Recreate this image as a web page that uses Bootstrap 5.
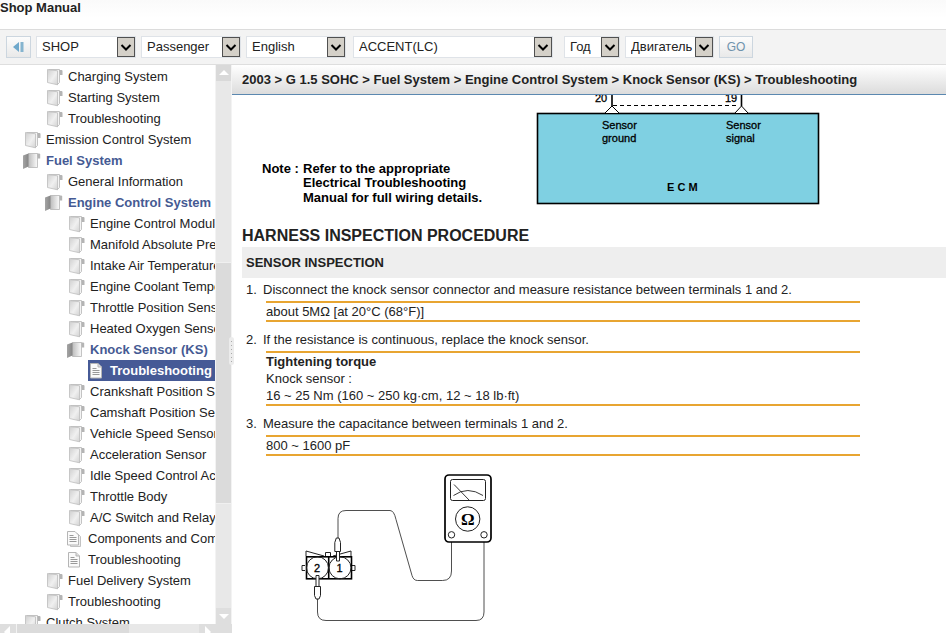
<!DOCTYPE html>
<html lang="en">
<head>
<meta charset="utf-8">
<meta name="viewport" content="width=device-width, initial-scale=1">
<title>Shop Manual</title>
<link rel="stylesheet" href="https://cdn.jsdelivr.net/npm/bootstrap@5.3.0/dist/css/bootstrap.min.css">
<style>
body { font: 13px/17px "Liberation Sans", Arial, sans-serif; color: #222; background: #fff; }
.sprite { position: absolute; width: 0; height: 0; }
.app-head { height: 29px; background: linear-gradient(#fafafa, #fff 18px); }
.app-title { font-size: 13px; line-height: 15px; font-weight: 700; }
.toolbar { gap: 5px; height: 36px; padding: 0 6px; background: #f3f3f3; border-top: 1px solid #dcdcdc; border-bottom: 1px solid #dedede; }
.pick { appearance: none; height: 22px; padding: 0 20px 2px 5px; border: 1px solid #dfe3e8; border-radius: 0; color: #222;
  background: #fff url("data:image/svg+xml,%3Csvg xmlns='http://www.w3.org/2000/svg' width='18' height='20'%3E%3Crect x='.5' y='.5' width='17' height='19' fill='%23d4d0c8' stroke='%23505050'/%3E%3Cpath d='M4.500 8l4.500 4.500L13.500 8' fill='none' stroke='%23000' stroke-width='2'/%3E%3C/svg%3E") no-repeat right 0 center; }
.pick-md { width: 100px; }
.pick-lg { width: 200px; margin-left: 2px; }
.pick-year { width: 56px; margin-left: 6px; }
.pick-engine { width: 89px; }
.tool-btn { height: 22px; border: 1px solid #ccd6df; border-radius: 0; padding: 0; background: linear-gradient(#fcfcfc, #e9e9e9); color: #6f93ad; font-size: 12px; line-height: 18px; }
.tool-back { width: 25px; }
.tool-go { width: 34px; }
.side { width: 232px; }
.tree-pane { padding: 1px 0 0 25px; }
.tree-pane ul ul { padding-left: 22px; }
.node { display: flex; align-items: center; height: 21px; gap: 5px; color: #222; text-decoration: none; white-space: nowrap; }
.node svg { width: 16px; height: 18px; flex: none; overflow: visible; }
.node.is-open { color: #455a93; font-weight: 700; }
.node.is-doc { margin-left: -2px; }
.node.is-current { background: #465a96; color: #fff; font-weight: 700; margin-left: -3px; padding-left: 1px; }
.vbar { width: 17px; background: #e8e8e8; border-left: 1px solid #f3f3f3; border-right: 1px solid #f3f3f3; }
.vbar-end { flex: 0 0 16px; background: #d9d9d9; }
.vbar-down { background: #dedede; }
.thumb-v { flex: 241; background: #dbdbdb; border-top: 1px solid #f0f0f0; border-bottom: 1px solid #f0f0f0; }
.gap-above { flex: 182; }
.gap-below { flex: 104; }
.hbar { height: 9px; background: #e8e8e8; overflow: hidden; }
.hbar-end { flex: 0 0 16px; background: #dedede; }
.hbar svg { display: block; }
.thumb-h { flex: 113; background: #dbdbdb; border-left: 1px solid #f3f3f3; }
.gap-right { flex: 70; }
.corner { flex: 0 0 17px; background: #dedede; }
.grip { position: absolute; right: -2px; top: 272px; width: 5px; height: 28px; background: #ececec; border-radius: 3px; }
.grip svg { display: block; }
.crumbs { height: 30px; padding-left: 10px; line-height: 30px; background: linear-gradient(#fff, #dcdcdc); border-bottom: 1px solid #5b88b0; font-size: 13px; font-weight: 700; white-space: nowrap; }
.doc { padding-left: 10px; }
.doc h1 { font-size: 16px; line-height: 20px; font-weight: 700; margin: 0 0 1px; }
.doc h2 { font-size: 13px; line-height: 31px; font-weight: 700; margin: 0 0 3px; padding-left: 4px; background: #eee; }
.steps { padding-left: 4px; }
.steps > li { margin-bottom: 9px; }
.steps > li:last-child { margin-bottom: 0; }
.num { width: 17px; flex: none; }
.spec { margin: 3px 86px 0 20px; border-top: 2px solid #e8a531; border-bottom: 2px solid #e8a531; }
.fig { display: block; max-width: 100%; }
.fig text { font-family: "Liberation Sans", Arial, sans-serif; fill: #000; }
</style>
<script src="https://cdn.jsdelivr.net/npm/bootstrap@5.3.0/dist/js/bootstrap.bundle.min.js"></script>
</head>
<body class="vh-100 d-flex flex-column overflow-hidden">
<svg class="sprite" aria-hidden="true">
  <defs>
    <linearGradient id="gPage" x1="0" y1="0" x2="1" y2="1"><stop offset="0" stop-color="#cfcfcf"/><stop offset=".55" stop-color="#f0f0f0"/><stop offset="1" stop-color="#d2d2d2"/></linearGradient>
    <linearGradient id="gCover"><stop offset="0" stop-color="#a5a5a5"/><stop offset="1" stop-color="#858585"/></linearGradient>
    <linearGradient id="gInner"><stop offset="0" stop-color="#bdbdbd"/><stop offset="1" stop-color="#fbfbfb"/></linearGradient>
  </defs>
  <symbol id="book" viewBox="0 0 16 18">
    <path d="M12 2h2.500q1 0 1 1v4h-2.500z" fill="#b4b4b4"/>
    <path d="M2 1.500h10.500v13l-2 2z" fill="#f4f4f4" stroke="#b5b5b5" stroke-width=".8"/>
    <path d="M.5 1.500l10 1.300v14L.5 14.500z" fill="url(#gPage)" stroke="#bcbcbc" stroke-width=".8"/>
  </symbol>
  <symbol id="book-open" viewBox="0 0 16 18" overflow="visible">
    <path d="M11.500 1.500H14q1.200 0 1.200 1v4h-2.500z" fill="#b4b4b4"/>
    <path d="M3.500 1.500h9v14h-9z" fill="url(#gInner)" stroke="#b5b5b5" stroke-width=".8"/>
    <path d="M-2 3.500l5.500-2v13L-2 17z" fill="url(#gCover)"/>
  </symbol>
  <symbol id="page" viewBox="0 0 16 18">
    <path d="M1.500 1.500h7.500l3.500 3.500v11h-11z" fill="#fafafa" stroke="#b5b5b5"/>
    <path d="M9 1.500V5h3.500" fill="#ddd" stroke="#b5b5b5"/>
    <path d="M3.500 6.500h4M3.500 8.500h7M3.500 10.500h7M3.500 12.500h7" stroke="#999" fill="none"/>
  </symbol>
  <symbol id="pages" viewBox="0 0 16 18">
    <path d="M3.500 3.500h7l3 3v10h-10z" fill="#eee" stroke="#c2c2c2"/>
    <path d="M.5 1.500h7.500l3.500 3.500v10H.5z" fill="#fafafa" stroke="#b5b5b5"/>
    <path d="M2.500 5.500h4M2.500 7.500h7M2.500 9.500h7M2.500 11.500h7" stroke="#999" fill="none"/>
  </symbol>
</svg>

<header class="app-head flex-shrink-0">
  <h1 class="app-title m-0">Shop Manual</h1>
</header>

<form class="toolbar d-flex align-items-center flex-shrink-0">
  <button type="button" class="tool-btn tool-back" aria-label="Hide contents">
    <svg width="12" height="12" viewBox="0 0 12 12" class="d-block mx-auto"><path d="M6 1v10L0 6z" fill="#6fa8cb"/><path d="M7.500 1h3v10h-3z" fill="#85b4cf"/></svg>
  </button>
  <select class="pick pick-md" aria-label="Manual"><option>SHOP</option></select>
  <select class="pick pick-md" aria-label="Vehicle type"><option>Passenger</option></select>
  <select class="pick pick-md" aria-label="Language"><option>English</option></select>
  <select class="pick pick-lg" aria-label="Model"><option>ACCENT(LC)</option></select>
  <select class="pick pick-year" aria-label="Year"><option>Год</option></select>
  <select class="pick pick-engine" aria-label="Engine"><option>Двигатель</option></select>
  <button type="button" class="tool-btn tool-go">GO</button>
</form>

<div class="d-flex flex-grow-1 overflow-hidden">
  <aside class="side d-flex flex-column flex-shrink-0 position-relative">
    <div class="d-flex flex-grow-1 overflow-hidden">
      <nav class="tree-pane flex-grow-1 overflow-hidden" aria-label="Contents">
        <ul class="list-unstyled m-0">
          <li><ul class="list-unstyled">
            <li><a class="node" href="#"><svg><use href="#book"/></svg>Charging System</a></li>
            <li><a class="node" href="#"><svg><use href="#book"/></svg>Starting System</a></li>
            <li><a class="node" href="#"><svg><use href="#book"/></svg>Troubleshooting</a></li>
          </ul></li>
          <li><a class="node" href="#"><svg><use href="#book"/></svg>Emission Control System</a></li>
          <li><a class="node is-open" href="#"><svg><use href="#book-open"/></svg>Fuel System</a>
            <ul class="list-unstyled">
              <li><a class="node" href="#"><svg><use href="#book"/></svg>General Information</a></li>
              <li><a class="node is-open" href="#"><svg><use href="#book-open"/></svg>Engine Control System</a>
                <ul class="list-unstyled">
                  <li><a class="node" href="#"><svg><use href="#book"/></svg>Engine Control Module</a></li>
                  <li><a class="node" href="#"><svg><use href="#book"/></svg>Manifold Absolute Pressure</a></li>
                  <li><a class="node" href="#"><svg><use href="#book"/></svg>Intake Air Temperature</a></li>
                  <li><a class="node" href="#"><svg><use href="#book"/></svg>Engine Coolant Temperature</a></li>
                  <li><a class="node" href="#"><svg><use href="#book"/></svg>Throttle Position Sensor</a></li>
                  <li><a class="node" href="#"><svg><use href="#book"/></svg>Heated Oxygen Sensor</a></li>
                  <li><a class="node is-open" href="#"><svg><use href="#book-open"/></svg>Knock Sensor (KS)</a>
                    <ul class="list-unstyled">
                      <li><a class="node is-current" href="#" aria-current="page"><svg><use href="#page"/></svg>Troubleshooting</a></li>
                    </ul></li>
                  <li><a class="node" href="#"><svg><use href="#book"/></svg>Crankshaft Position Sensor</a></li>
                  <li><a class="node" href="#"><svg><use href="#book"/></svg>Camshaft Position Sensor</a></li>
                  <li><a class="node" href="#"><svg><use href="#book"/></svg>Vehicle Speed Sensor</a></li>
                  <li><a class="node" href="#"><svg><use href="#book"/></svg>Acceleration Sensor</a></li>
                  <li><a class="node" href="#"><svg><use href="#book"/></svg>Idle Speed Control Actuator</a></li>
                  <li><a class="node" href="#"><svg><use href="#book"/></svg>Throttle Body</a></li>
                  <li><a class="node" href="#"><svg><use href="#book"/></svg>A/C Switch and Relay</a></li>
                  <li><a class="node is-doc" href="#"><svg><use href="#pages"/></svg>Components and Components Location</a></li>
                  <li><a class="node is-doc" href="#"><svg><use href="#page"/></svg>Troubleshooting</a></li>
                </ul></li>
              <li><a class="node" href="#"><svg><use href="#book"/></svg>Fuel Delivery System</a></li>
              <li><a class="node" href="#"><svg><use href="#book"/></svg>Troubleshooting</a></li>
            </ul></li>
          <li><a class="node" href="#"><svg><use href="#book"/></svg>Clutch System</a></li>
        </ul>
      </nav>
      <div class="vbar d-flex flex-column flex-shrink-0" aria-hidden="true">
        <div class="vbar-end"><svg width="15" height="16" class="d-block"><path d="M3 10l5-5 5 5z" fill="#fff"/></svg></div>
        <div class="gap-above"></div><div class="thumb-v"></div><div class="gap-below"></div>
        <div class="vbar-end vbar-down"><svg width="15" height="16" class="d-block"><path d="M3 6l5 5 5-5z" fill="#fff"/></svg></div>
      </div>
    </div>
    <div class="hbar d-flex flex-shrink-0" aria-hidden="true">
      <div class="hbar-end"><svg width="16" height="16"><path d="M10 2L4 8l6 6z" fill="#fff"/></svg></div>
      <div class="thumb-h"></div><div class="gap-right"></div>
      <div class="hbar-end"><svg width="16" height="16"><path d="M6 2l6 6-6 6z" fill="#fff"/></svg></div>
      <div class="corner"></div>
    </div>
    <div class="grip" aria-hidden="true"><svg width="5" height="28"><path d="M2.500 4v22" stroke="#aaa" stroke-dasharray="1 3"/></svg></div>
  </aside>

  <main class="flex-grow-1 overflow-hidden">
    <div class="crumbs">2003 &gt; G 1.5 SOHC &gt; Fuel System &gt; Engine Control System &gt; Knock Sensor (KS) &gt; Troubleshooting</div>
    <article class="doc">
      <svg class="fig" width="600" height="131" viewBox="242 95 600 131" role="img" aria-label="ECM wiring">
        <rect x="537.500" y="113.500" width="281" height="90" fill="#7fd0e2" stroke="#000" stroke-width="1.600"/>
        <path d="M612 95v11M741.500 95v11" stroke="#000" stroke-width="1.600"/>
        <path d="M605 113l7-7 7 7M735 113l6.500-7 6.500 7" fill="#fff" stroke="#000"/>
        <path d="M613 105.500h125" stroke="#000" stroke-dasharray="4 3"/>
        <g font-size="11" stroke="#000" stroke-width=".3"><text x="595" y="102">20</text><text x="725" y="102">19</text>
        <text x="602" y="129">Sensor</text><text x="602" y="142">ground</text>
        <text x="726" y="129">Sensor</text><text x="726" y="142">signal</text></g>
        <text x="667" y="191" font-size="11" font-weight="700">E C M</text>
        <g font-size="13" font-weight="700"><text x="262" y="173">Note :</text>
        <text x="303" y="173">Refer to the appropriate</text>
        <text x="303" y="187">Electrical Troubleshooting</text>
        <text x="303" y="202">Manual for full wiring details.</text></g>
      </svg>
      <h1>HARNESS INSPECTION PROCEDURE</h1>
      <h2>SENSOR INSPECTION</h2>
      <ol class="steps list-unstyled m-0">
        <li><div class="d-flex"><span class="num">1.</span><span>Disconnect the knock sensor connector and measure resistance between terminals 1 and 2.</span></div>
          <div class="spec">about 5MΩ [at 20°C (68°F)]</div></li>
        <li><div class="d-flex"><span class="num">2.</span><span>If the resistance is continuous, replace the knock sensor.</span></div>
          <div class="spec"><strong>Tightening torque</strong><br>Knock sensor :<br>16 ~ 25 Nm (160 ~ 250 kg·cm, 12 ~ 18 lb·ft)</div></li>
        <li><div class="d-flex"><span class="num">3.</span><span>Measure the capacitance between terminals 1 and 2.</span></div>
          <div class="spec">800 ~ 1600 pF</div></li>
      </ol>
      <svg class="fig" width="280" height="177" viewBox="242 456 280 177" role="img" aria-label="Measuring the knock sensor with an ohmmeter" fill="none" stroke="#222">
        <path d="M451.500 538v33q0 9.500-9 9.500h-25q-4 0-5.500-5l-16-56q-2-9-6-9h-44q-8 0-8 8v20M484 538v74q0 8.500-8 8.500H326q-8.500 0-8.500-8.500v-13" stroke-width=".8"/>
        <rect x="445" y="475" width="46" height="67" rx="4" fill="#fff" stroke="#000" stroke-width="1.700"/>
        <rect x="450.500" y="479.500" width="35" height="21" rx="2"/>
        <path d="M454 484.500l15.500 16M453.500 495.500q14-10 29.500 0" stroke-width=".9"/>
        <circle cx="467.700" cy="519" r="12.200"/>
        <text x="467.700" y="525" font-size="17" font-weight="700" text-anchor="middle" stroke="none" style="font-family:'Liberation Serif','Times New Roman',serif">Ω</text>
        <circle cx="451.500" cy="534.800" r="3.200" fill="#fff"/><circle cx="484" cy="534.800" r="3.200" fill="#fff"/>
        <path d="M306 556v-5l18 5M351 556v-5l-18 5M325.500 556v-3.500h5v3.500M305 565.500h-3v5h3M352 565.500h3v5h-3"/>
        <rect x="306.500" y="556.800" width="45" height="22" fill="#fff" stroke="#000" stroke-width="1.600"/>
        <path d="M328.700 557v22" stroke="#000" stroke-width="1.600"/>
        <circle cx="317.500" cy="567.800" r="11"/><circle cx="340" cy="567.800" r="11"/>
        <g font-size="11" stroke="#000" stroke-width=".3" text-anchor="middle"><text x="317" y="572">2</text><text x="339.500" y="572">1</text></g>
        <path d="M336.500 551v10h3v-10M316 586v-10.500h3V586" fill="#fff"/>
        <path d="M334.800 551.500v-9l1.500-4.500h2.700l1.500 4.500v9zM314.500 586.500h6v9l-1.500 3.500h-3l-1.500-3.500z" fill="#fff"/>
      </svg>
    </article>
  </main>
</div>
</body>
</html>
